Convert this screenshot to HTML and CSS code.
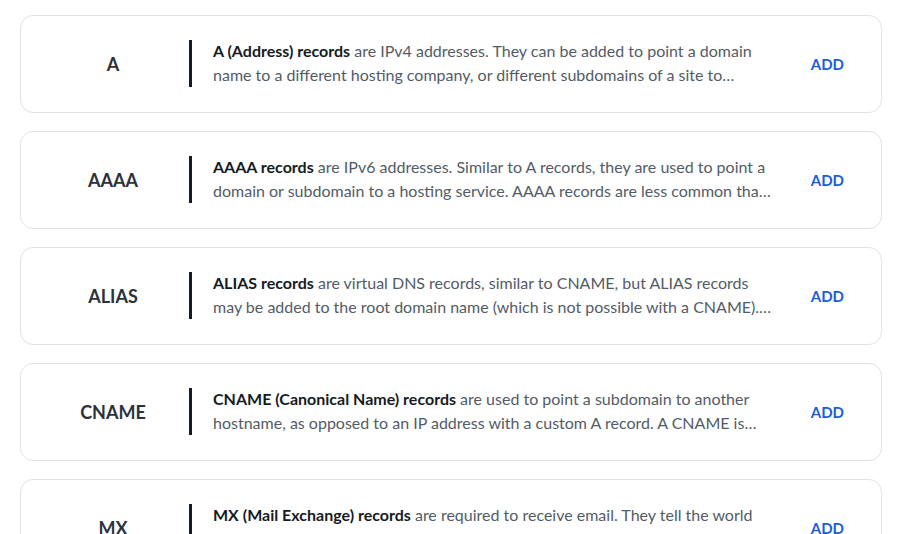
FILE: index.html
```html
<!DOCTYPE html>
<html lang="en">
<head>
    <meta charset="UTF-8">
    <meta name="viewport" content="width=device-width, initial-scale=1.0">
    <title>DNS Records</title>
    <link rel="stylesheet" href="styles.css">
</head>
<body>
    <main class="record-list">
        <div class="record-card">
            <div class="record-type">A</div>
            <div class="record-divider"></div>
            <p class="record-desc"><strong>A (Address) records</strong> are IPv4 addresses. They can be added to point a domain name to a different hosting company, or different subdomains of a site to different hosting locations or servers.</p>
            <button class="add-button">ADD</button>
        </div>

        <div class="record-card">
            <div class="record-type">AAAA</div>
            <div class="record-divider"></div>
            <p class="record-desc"><strong>AAAA records</strong> are IPv6 addresses. Similar to A records, they are used to point a domain or subdomain to a hosting service. AAAA records are less common than A records.</p>
            <button class="add-button">ADD</button>
        </div>

        <div class="record-card">
            <div class="record-type">ALIAS</div>
            <div class="record-divider"></div>
            <p class="record-desc"><strong>ALIAS records</strong> are virtual DNS records, similar to CNAME, but ALIAS records may be added to the root domain name (which is not possible with a CNAME). They are resolved to an IP address.</p>
            <button class="add-button">ADD</button>
        </div>

        <div class="record-card">
            <div class="record-type">CNAME</div>
            <div class="record-divider"></div>
            <p class="record-desc"><strong>CNAME (Canonical Name) records</strong> are used to point a subdomain to another hostname, as opposed to an IP address with a custom A record. A CNAME is often used for www.</p>
            <button class="add-button">ADD</button>
        </div>

        <div class="record-card">
            <div class="record-type">MX</div>
            <div class="record-divider"></div>
            <p class="record-desc"><strong>MX (Mail Exchange) records</strong> are required to receive email. They tell the world which mail servers accept incoming mail for a domain and where mail should be sent.</p>
            <button class="add-button">ADD</button>
        </div>
    </main>
</body>
</html>
```

FILE: styles.css
```css
body {
    margin: 0;
    padding: 0;
    background-color: #fff;
    font-family: 'Lato', sans-serif;
}

.record-list {
    display: flex;
    flex-direction: column;
    gap: 18px;
    padding: 15px 18px 0 20px;
}

.record-card {
    display: flex;
    align-items: center;
    height: 98px;
    box-sizing: border-box;
    padding: 0 37px 1px 16px;
    border: 1px solid #e1e3e7;
    border-radius: 13px;
    background-color: #fff;
}

.record-type {
    width: 152px;
    flex-shrink: 0;
    text-align: center;
    font-size: 18px;
    font-weight: 700;
    color: #2b323b;
}

.record-divider {
    width: 3px;
    height: 47px;
    flex-shrink: 0;
    background-color: #141c28;
}

.record-desc {
    flex: 1;
    margin: -1px 38px 0 21px;
    font-size: 16px;
    line-height: 24px;
    color: #535c66;
    display: -webkit-box;
    -webkit-line-clamp: 2;
    -webkit-box-orient: vertical;
    overflow: hidden;
}

.record-desc strong {
    color: #161b22;
    font-weight: 700;
}

.add-button {
    background: none;
    border: none;
    padding: 0;
    cursor: pointer;
    font-family: 'Lato', sans-serif;
    font-size: 15px;
    font-weight: 700;
    color: #1a5fd8;
}
```
